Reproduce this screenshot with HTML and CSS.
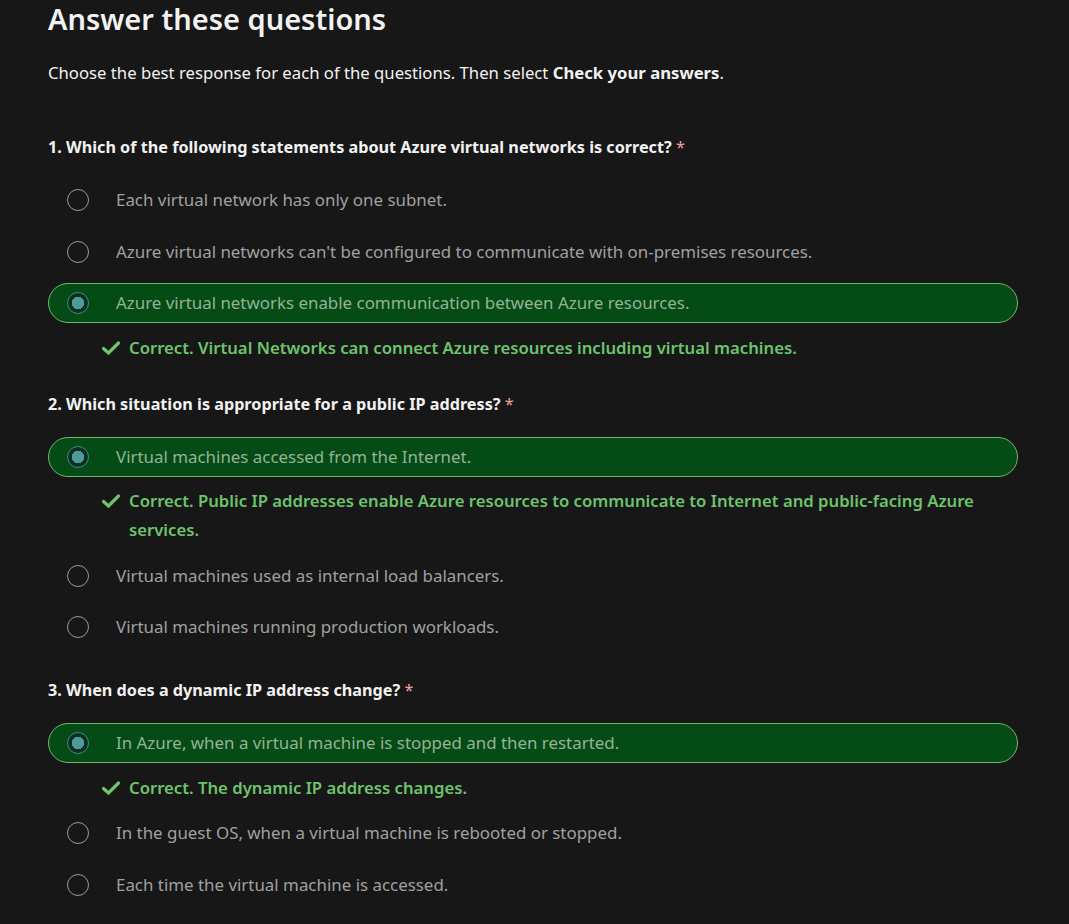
FILE: index.html
```html
<!DOCTYPE html>
<html lang="en">
<head>
<meta charset="utf-8">
<title>Answer these questions</title>
<link rel="stylesheet" href="styles.css">
</head>
<body>
<main class="quiz">
  <h1 class="title">Answer these questions</h1>
  <p class="intro">Choose the best response for each of the questions. Then select <strong>Check your answers</strong>.</p>

  <section class="question">
    <h2 class="q-text">1. Which of the following statements about Azure virtual networks is correct? <span class="req">*</span></h2>
    <div class="options">
      <label class="option"><span class="radio"></span><span class="opt-text">Each virtual network has only one subnet.</span></label>
      <label class="option"><span class="radio"></span><span class="opt-text">Azure virtual networks can't be configured to communicate with on-premises resources.</span></label>
      <label class="option selected"><span class="radio"></span><span class="opt-text">Azure virtual networks enable communication between Azure resources.</span></label>
      <div class="feedback"><svg class="check" viewBox="0 0 20 16" width="20" height="16"><path d="M2.5 8.5 L7.5 13 L17.5 3" fill="none" stroke="currentColor" stroke-width="3.2" stroke-linecap="round" stroke-linejoin="miter"/></svg><span>Correct. Virtual Networks can connect Azure resources including virtual machines.</span></div>
    </div>
  </section>

  <section class="question">
    <h2 class="q-text">2. Which situation is appropriate for a public IP address? <span class="req">*</span></h2>
    <div class="options">
      <label class="option selected"><span class="radio"></span><span class="opt-text">Virtual machines accessed from the Internet.</span></label>
      <div class="feedback"><svg class="check" viewBox="0 0 20 16" width="20" height="16"><path d="M2.5 8.5 L7.5 13 L17.5 3" fill="none" stroke="currentColor" stroke-width="3.2" stroke-linecap="round" stroke-linejoin="miter"/></svg><span>Correct. Public IP addresses enable Azure resources to communicate to Internet and public-facing Azure services.</span></div>
      <label class="option"><span class="radio"></span><span class="opt-text">Virtual machines used as internal load balancers.</span></label>
      <label class="option"><span class="radio"></span><span class="opt-text">Virtual machines running production workloads.</span></label>
    </div>
  </section>

  <section class="question">
    <h2 class="q-text">3. When does a dynamic IP address change? <span class="req">*</span></h2>
    <div class="options">
      <label class="option selected"><span class="radio"></span><span class="opt-text">In Azure, when a virtual machine is stopped and then restarted.</span></label>
      <div class="feedback"><svg class="check" viewBox="0 0 20 16" width="20" height="16"><path d="M2.5 8.5 L7.5 13 L17.5 3" fill="none" stroke="currentColor" stroke-width="3.2" stroke-linecap="round" stroke-linejoin="miter"/></svg><span>Correct. The dynamic IP address changes.</span></div>
      <label class="option"><span class="radio"></span><span class="opt-text">In the guest OS, when a virtual machine is rebooted or stopped.</span></label>
      <label class="option"><span class="radio"></span><span class="opt-text">Each time the virtual machine is accessed.</span></label>
    </div>
  </section>
</main>
</body>
</html>
```

FILE: styles.css
```css
* { box-sizing: border-box; }

html, body {
  margin: 0;
  padding: 0;
  background: #171717;
}

body {
  font-family: "Segoe UI", "Noto Sans", "Open Sans", sans-serif;
  color: #f2f2f2;
  font-size: 16px;
}

.quiz {
  width: 970px;
  margin-left: 48px;
  display: flex;
  flex-direction: column;
}

.title {
  margin: 0;
  font-size: 29px;
  font-weight: 600;
  line-height: 38px;
  color: #f2f2f2;
}

.intro {
  margin: 23px 0 0;
  font-size: 16.7px;
  line-height: 24px;
  color: #f2f2f2;
}

.intro strong {
  font-weight: 700;
}

.question {
  display: flex;
  flex-direction: column;
  margin-top: 30px;
}

.question:first-of-type {
  margin-top: 50px;
}

.question:last-of-type {
  margin-top: 31px;
}

.q-text {
  margin: 0 0 21px;
  font-size: 16.2px;
  font-weight: 700;
  line-height: 24px;
  color: #f2f2f2;
}

.req {
  color: #f1a1a1;
  font-weight: 400;
}

.options {
  display: flex;
  flex-direction: column;
  gap: 11.5px;
}

.option {
  display: flex;
  align-items: center;
  height: 40px;
  padding-left: 18px;
  border: 1px solid transparent;
  border-radius: 20px;
  color: #a0a0a0;
  font-size: 16.9px;
  line-height: 24px;
}

.radio {
  width: 22px;
  height: 22px;
  flex: none;
  border-radius: 50%;
  border: 1.5px solid #9a9a9a;
  margin-right: 27px;
}

.option.selected {
  background: #054b16;
  border-color: #6cb86c;
  color: #93b396;
}

.option.selected .radio {
  border: 1.5px solid #3f8b8b;
  background: radial-gradient(circle, #4e9a9a 0 6px, #10301f 6.5px);
}

.feedback {
  display: flex;
  align-items: flex-start;
  margin-top: -2px;
  padding-left: 53px;
  padding-right: 30px;
  color: #6cc46c;
  font-size: 16.7px;
  font-weight: 600;
  line-height: 29px;
}

.check {
  flex: none;
  margin-top: 7px;
  margin-right: 8px;
}
```
